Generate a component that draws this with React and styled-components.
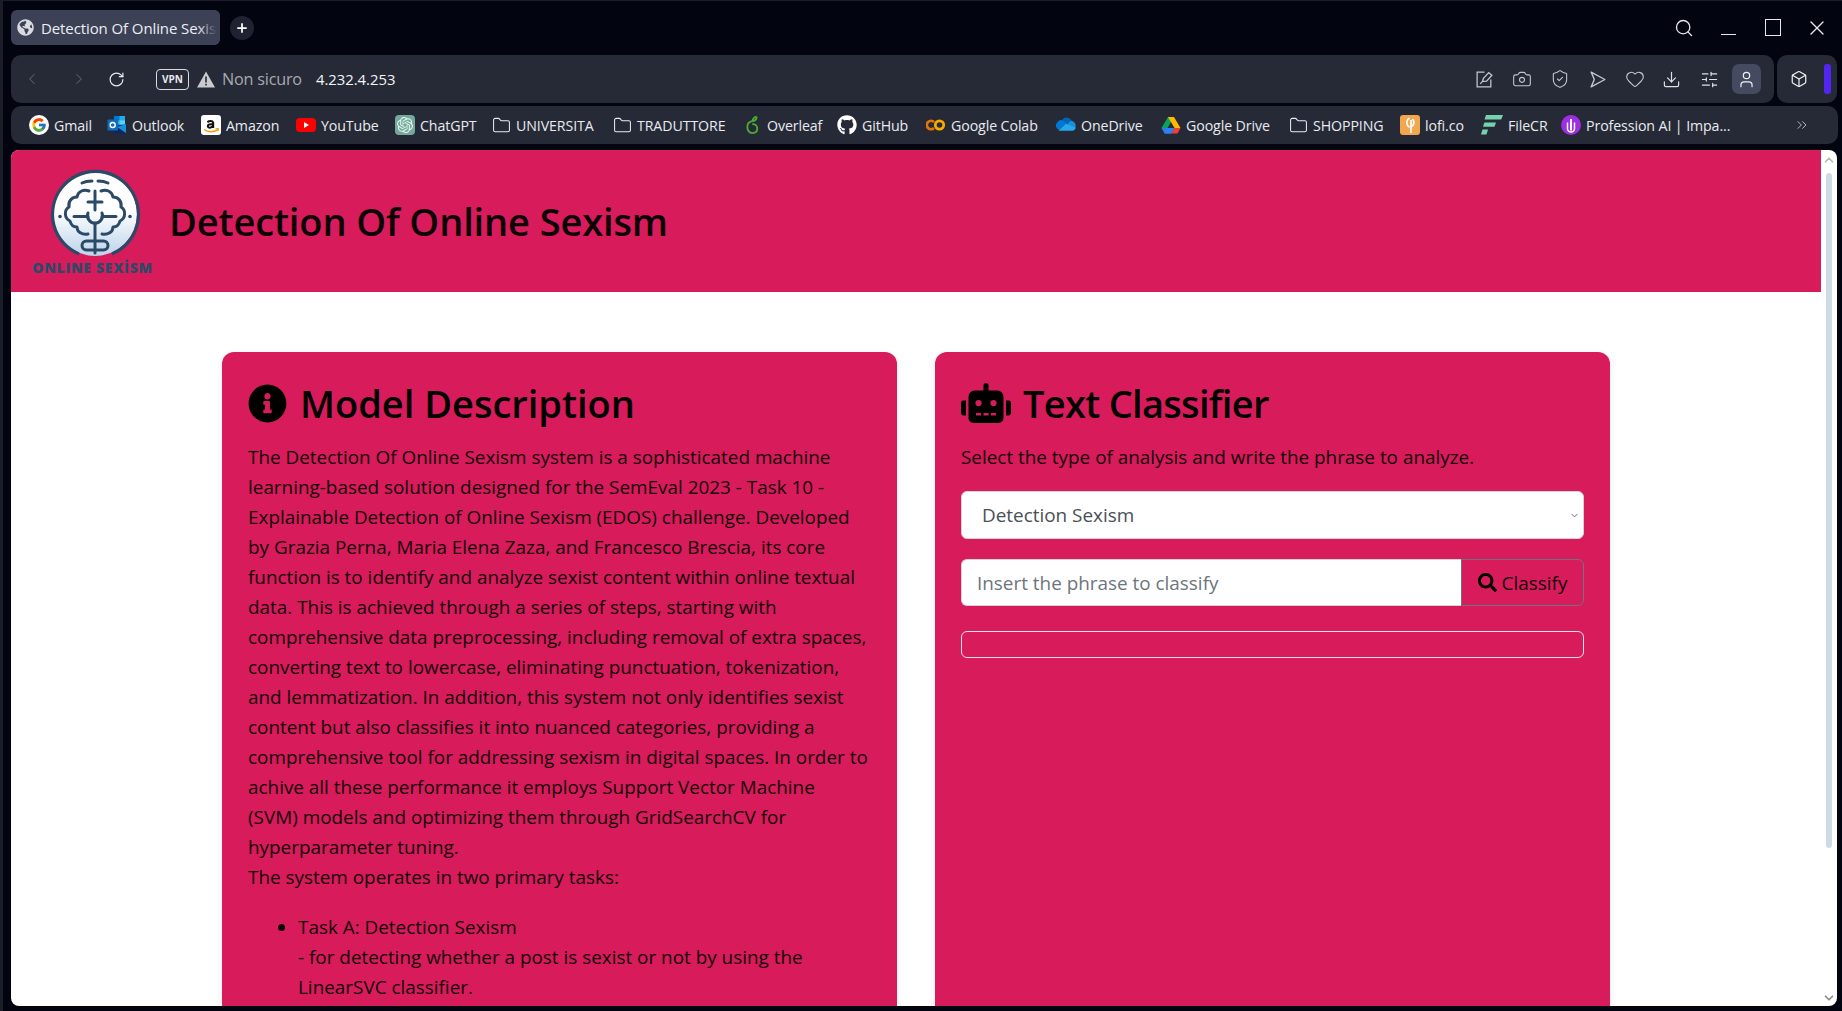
import React from "react";
import styled, { createGlobalStyle } from "styled-components";
import {
  ChevronLeft, ChevronRight, RotateCw, Camera, ShieldCheck, Heart, Download,
  SlidersHorizontal, User, Box, Search, X, Folder, ChevronsRight, ChevronUp, ChevronDown, Plus,
} from "lucide-react";
import { FaInfoCircle, FaRobot, FaSearch, FaGithub, FaGlobeAmericas } from "react-icons/fa";
import { FcGoogle } from "react-icons/fc";
import { SiOpenai } from "react-icons/si";

const PINK = "#d81b5b";
const BAR = "#262a36";
const FONT = `"Open Sans", "Noto Sans", "Liberation Sans", sans-serif`;

const GlobalStyle = createGlobalStyle`
  html, body { margin: 0; padding: 0; background: #02040f; overflow: hidden; }
  * { box-sizing: border-box; }
  body { font-family: ${FONT}; }
`;

const Win = styled.div`
  width: 1842px;
  height: 1011px;
  background: #02040f;
  box-shadow: inset 3px 1px 0 #1b1e29;
  overflow: hidden;
  display: flex;
  flex-direction: column;
`;

const TabStrip = styled.div`
  height: 55px;
  padding: 10px 5px 10px 11px;
  display: flex;
  align-items: center;
  color: #fff;
`;

const Tab = styled.div`
  position: relative;
  width: 209px;
  height: 35px;
  background: #3d4156;
  border-radius: 6px;
  display: flex;
  align-items: center;
  gap: 7px;
  padding: 0 6px;
  overflow: hidden;
  font-size: 15px;
  letter-spacing: -0.1px;
  white-space: nowrap;
  color: #eceef4;
  svg { flex: none; color: #d9dbe3; }
  &::after {
    content: "";
    position: absolute;
    top: 0;
    right: 0;
    bottom: 0;
    width: 22px;
    background: linear-gradient(to right, rgba(61, 65, 86, 0), #3d4156 85%);
  }
`;

const NewTab = styled.div`
  width: 24px;
  height: 24px;
  margin-left: 10px;
  border-radius: 50%;
  background: #1f2230;
  display: flex;
  align-items: center;
  justify-content: center;
`;

const WinControls = styled.div`
  margin-left: auto;
  display: flex;
  align-items: center;
  gap: 20.5px;
  padding-right: 8px;
  color: #e6e7ea;
`;

const WinSlot = styled.div`
  width: 24px;
  height: 24px;
  display: flex;
  align-items: center;
  justify-content: center;
`;

const Minimize = styled.div`
  width: 15px;
  height: 1.5px;
  margin-top: 14px;
  background: #e6e7ea;
`;

const Maximize = styled.div`
  width: 16px;
  height: 17px;
  border: 1.5px solid #e6e7ea;
`;

const AddressRow = styled.div`
  height: 48px;
  padding: 0 5px 0 11px;
  display: flex;
  gap: 3px;
`;

const AddressBar = styled.div`
  flex: 1;
  background: ${BAR};
  border-radius: 10px;
  display: flex;
  align-items: center;
  padding: 0 13px 0 12px;
  color: #d6d8de;
`;

const NavSlot = styled.div`
  width: ${(p) => p.$w}px;
  display: flex;
  align-items: center;
  color: ${(p) => p.$color || "#e8e9ee"};
`;

const Vpn = styled.div`
  width: 33px;
  height: 21px;
  border: 1px solid #d9dae0;
  border-radius: 4px;
  font-size: 10px;
  font-weight: 700;
  color: #e8e9ee;
  display: flex;
  align-items: center;
  justify-content: center;
  margin-right: 8px;
`;

const NotSecure = styled.span`
  font-size: 16.2px;
  letter-spacing: -0.2px;
  color: #a7a9b0;
  margin-left: 7px;
  width: 94px;
  white-space: nowrap;
`;

const Ip = styled.span`
  font-size: 14.8px;
  color: #f4f5f8;
`;

const ToolIcons = styled.div`
  margin-left: auto;
  display: flex;
  align-items: center;
  svg { display: block; }
`;

const ToolIcon = styled.div`
  width: 37.4px;
  display: flex;
  justify-content: center;
  color: #c4c6ce;
`;

const ProfileBtn = styled.div`
  width: 29px;
  height: 30px;
  border-radius: 7px;
  background: #464a60;
  color: #f0f1f5;
  display: flex;
  align-items: center;
  justify-content: center;
  margin-left: 4px;
`;

const ExtBox = styled.div`
  width: 60px;
  background: ${BAR};
  border-radius: 10px;
  display: flex;
  align-items: center;
  padding-left: 13px;
  color: #f0f1f5;
`;

const ExtBar = styled.div`
  width: 7px;
  height: 30px;
  margin-left: 16px;
  border-radius: 3px;
  background: #5225f0;
`;

const Bookmarks = styled.div`
  height: 38px;
  margin: 3px 4px 6px 11px;
  background: ${BAR};
  border-radius: 10px;
  display: flex;
  align-items: center;
  padding-left: 18px;
`;

const Bookmark = styled.div`
  width: ${(p) => p.$w}px;
  flex: none;
  display: flex;
  align-items: center;
  gap: 5px;
  font-size: 14.2px;
  letter-spacing: -0.1px;
  color: #e9ebf0;
  white-space: nowrap;
  svg { flex: none; display: block; }
`;

const MoreBookmarks = styled.div`
  margin-left: auto;
  margin-right: 28px;
  display: flex;
  color: #c9cbd2;
`;

const Page = styled.div`
  height: 856px;
  margin: 0 5px 0 11px;
  background: #fff;
  border-radius: 8px;
  overflow: hidden;
  display: flex;
`;

const Content = styled.div`
  flex: 1;
  min-width: 0;
  overflow: hidden;
`;

const Scrollbar = styled.div`
  width: 16px;
  flex: none;
  display: flex;
  flex-direction: column;
  align-items: center;
  justify-content: space-between;
  color: #8b8d92;
  padding: 3px 0 0;
`;

const Thumb = styled.div`
  width: 6px;
  height: 675px;
  margin-top: 6px;
  margin-bottom: auto;
  border-radius: 3px;
  background: #cfdae4;
`;

const Header = styled.header`
  height: 142px;
  background: ${PINK};
  display: flex;
  align-items: center;
  padding-left: 19px;
  gap: 14px;
`;

const Title = styled.h1`
  margin: 0;
  font-size: 38px;
  font-weight: 600;
  letter-spacing: -0.12px;
  color: #0a0005;
`;

const LogoText = styled.text`
  font-family: ${FONT};
  font-weight: 800;
  font-size: 14px;
  letter-spacing: 0.7px;
  fill: #2a4a68;
`;

const Cards = styled.main`
  display: flex;
  justify-content: center;
  gap: 38px;
  padding-top: 60px;
`;

const Card = styled.section`
  width: 675px;
  padding: 26px;
  background: ${PINK};
  border-radius: 12px;
  box-shadow: 0 2px 8px rgba(0, 0, 0, 0.08);
  min-height: 760px;
`;

const CardTitle = styled.h2`
  margin: 0 0 14px;
  height: 50px;
  display: flex;
  align-items: center;
  gap: 13px;
  font-size: 38px;
  font-weight: 600;
  letter-spacing: ${(p) => p.$spacing}px;
  color: #000;
  white-space: nowrap;
  svg { flex: none; }
`;

const TextLine = styled.span`
  display: block;
  height: 30px;
  line-height: 30px;
  font-size: 18.9px;
  color: #14020a;
  white-space: nowrap;
`;

const TaskList = styled.ul`
  margin: 20px 0 0;
  padding: 0 0 0 50px;
`;

const TaskItem = styled.li`
  font-size: 18.9px;
  line-height: 30px;
  color: #14020a;
`;

const Hint = styled(TextLine)`
  margin-bottom: 19px;
`;

const SelectWrap = styled.div`
  position: relative;
  color: #5f6670;
  svg { position: absolute; right: 4px; top: 19px; }
`;

const Select = styled.select`
  display: block;
  width: 100%;
  height: 48px;
  padding: 0 20px;
  appearance: none;
  background: #fff;
  border: 1px solid #ced4da;
  border-radius: 6px;
  font-family: ${FONT};
  font-size: 18.9px;
  color: #495057;
`;

const SearchGroup = styled.form`
  display: flex;
  height: 47px;
  margin: 20px 0 25px;
`;

const PhraseInput = styled.input`
  flex: 1;
  min-width: 0;
  padding: 0 15px;
  background: #fff;
  border: 1px solid #ced4da;
  border-right: 0;
  border-radius: 6px 0 0 6px;
  font-family: ${FONT};
  font-size: 18.9px;
  &::placeholder { color: #6c757d; opacity: 1; }
`;

const ClassifyBtn = styled.button`
  width: 123px;
  display: flex;
  align-items: center;
  justify-content: center;
  gap: 5px;
  background: ${PINK};
  border: 1px solid #6c757d;
  border-radius: 0 6px 6px 0;
  font-family: ${FONT};
  font-size: 18.9px;
  color: #14020a;
`;

const ResultBox = styled.div`
  height: 27px;
  border: 1px solid #f3e3e9;
  border-radius: 6px;
`;

const Tile = styled.span`
  width: 20px;
  height: 20px;
  flex: none;
  border-radius: 4px;
  background: #74aa9c;
  display: flex;
  align-items: center;
  justify-content: center;
`;

const GoogleTile = styled.span`
  width: 20px;
  height: 20px;
  flex: none;
  border-radius: 50%;
  background: #fff;
  display: flex;
  align-items: center;
  justify-content: center;
`;

const OutlookIcon = () => (
  <svg width="20" height="20" viewBox="0 0 20 20">
    <path d="M7 1h11v9H7z" fill="#28a8ea" />
    <path d="M7 1h5.500v4.500H7z" fill="#0078d4" />
    <path d="M12.500 5.500H18V10h-5.500z" fill="#50d9ff" />
    <path d="M7 10l11-0.500V18a1 1 0 0 1-1 1H8a1 1 0 0 1-1-1z" fill="#0a2767" opacity="0.85" />
    <path d="M10 12l9-3v9z" fill="#1490df" />
    <rect x="0.500" y="4.500" width="10.500" height="11" rx="1" fill="#0f6cbd" />
    <circle cx="5.700" cy="10" r="2.500" fill="none" stroke="#fff" strokeWidth="1.400" />
  </svg>
);

const AmazonIcon = () => (
  <svg width="20" height="20" viewBox="0 0 20 20">
    <rect width="20" height="20" rx="3" fill="#fff" />
    <path d="M6.800 7.500c.3-1.700 4.800-2.200 5.400.2v5.200M12 9.300c-3-.2-5.400.2-5.200 2.100.2 1.800 3.600 1.700 5.200-.5" fill="none" stroke="#111" strokeWidth="2" />
    <path d="M3 14.500c4 3 10 3 14-.2" fill="none" stroke="#f90" strokeWidth="1.500" />
    <path d="M14.500 13.800l3-.3-.6 2.700" fill="none" stroke="#f90" strokeWidth="1" />
  </svg>
);

const YoutubeIcon = () => (
  <svg width="20" height="20" viewBox="0 0 20 20">
    <rect y="3" width="20" height="14" rx="4" fill="#f00" />
    <path d="M8 7l5 3-5 3z" fill="#fff" />
  </svg>
);

const ChatGptIcon = () => (
  <Tile>
    <SiOpenai size={16} color="#e9f4ef" />
  </Tile>
);

const OverleafIcon = () => (
  <svg width="20" height="20" viewBox="0 0 20 20" fill="none" stroke="#4cae33" strokeWidth="1.800">
    <path d="M14.500 1.500c.3 3-1.700 4.300-4 4.600-3 .4-5.200 2.800-5.200 6 0 3.400 2.200 6 5 6 3 0 5-2 5-4.800 0-2.600-2.200-4.500-5-4.200" />
    <path d="M10.500 6.100c.2-2.200 1.800-4 4-4.600" />
  </svg>
);

const ColabIcon = () => (
  <svg width="20" height="20" viewBox="0 0 20 20" fill="none" stroke="#f9ab00" strokeWidth="2.800">
    <path d="M8 7a4.200 4.200 0 1 0 0 6" stroke="#e8710a" />
    <circle cx="13.500" cy="10" r="4.200" />
  </svg>
);

const OneDriveIcon = () => (
  <svg width="20" height="20" viewBox="3 3 16 16">
    <path d="M8 6.500a5 5 0 0 1 8 1.500l-6 4.500z" fill="#0364b8" />
    <path d="M4 9a4 4 0 0 1 5 -1.500l4 3.500-7 4a3.500 3.500 0 0 1-2-6z" fill="#0078d4" />
    <path d="M14 8a3.700 3.700 0 0 1 4.500 4.800L12 11z" fill="#1490df" />
    <path d="M5 15.500h11a3 3 0 0 0 2.700-2.800L11 10z" fill="#28a8ea" />
  </svg>
);

const DriveIcon = () => (
  <svg width="20" height="20" viewBox="0 0 20 20">
    <path d="M7 2h6l-6.500 11H0.500z" fill="#0ba25e" />
    <path d="M13 2l6.500 11h-6L7 2z" fill="#ffba00" />
    <path d="M0.500 13h6.200L13 13l-3 5.500H3.500z" fill="#3777e3" />
    <path d="M13 13h6.500l-3 5.500H10z" fill="#e94235" />
    <path d="M6.500 13H13l-3 5.500H3.500z" fill="#2684fc" />
  </svg>
);

const LofiIcon = () => (
  <svg width="20" height="20" viewBox="0 0 20 20">
    <rect width="20" height="20" rx="3" fill="#f2a64e" />
    <path d="M9.500 3C6.500 5 6 8.500 8 11c.6.8 1.200 1 1.500.3M12.500 4c1.600 2 1.700 5-.2 7.500M11 5v13" fill="none" stroke="#fff" strokeWidth="1.700" />
  </svg>
);

const FileCrIcon = () => (
  <svg width="22" height="22" viewBox="0 0 22 22" fill="#74d3ae">
    <path d="M5 1h17l-1.800 4.500H3.500z" />
    <path d="M3.400 8.500H15l-1.500 4.300H2z" />
    <path d="M1.500 15.500H7l-1.500 5H0z" />
  </svg>
);

const ProfessionIcon = () => (
  <svg width="20" height="20" viewBox="0 0 20 20">
    <circle cx="10" cy="10" r="10" fill="#9d2fe0" />
    <path d="M6.500 7.500v6a3.500 3.500 0 0 0 7 0v-6" fill="none" stroke="#fff" strokeWidth="1.500" />
    <path d="M10 4v11.500" stroke="#fff" strokeWidth="2" />
  </svg>
);

const FolderIcon = () => <Folder size={19} strokeWidth={1.3} color="#e9ebf0" />;

const bookmarks = [
  { name: "Gmail", w: 78, icon: <GoogleTile><FcGoogle size={16} /></GoogleTile> },
  { name: "Outlook", w: 94, icon: <OutlookIcon /> },
  { name: "Amazon", w: 95, icon: <AmazonIcon /> },
  { name: "YouTube", w: 99, icon: <YoutubeIcon /> },
  { name: "ChatGPT", w: 97, icon: <ChatGptIcon /> },
  { name: "UNIVERSITA", w: 121, icon: <FolderIcon /> },
  { name: "TRADUTTORE", w: 129, icon: <FolderIcon /> },
  { name: "Overleaf", w: 95, icon: <OverleafIcon /> },
  { name: "GitHub", w: 89, icon: <FaGithub size={20} color="#fff" /> },
  { name: "Google Colab", w: 130, icon: <ColabIcon /> },
  { name: "OneDrive", w: 105, icon: <OneDriveIcon /> },
  { name: "Google Drive", w: 128, icon: <DriveIcon /> },
  { name: "SHOPPING", w: 111, icon: <FolderIcon /> },
  { name: "lofi.co", w: 81, icon: <LofiIcon /> },
  { name: "FileCR", w: 80, icon: <FileCrIcon /> },
  { name: "Profession AI | Impa...", w: 190, icon: <ProfessionIcon /> },
];

const descriptionLines = [
  "The Detection Of Online Sexism system is a sophisticated machine",
  "learning-based solution designed for the SemEval 2023 - Task 10 -",
  "Explainable Detection of Online Sexism (EDOS) challenge. Developed",
  "by Grazia Perna, Maria Elena Zaza, and Francesco Brescia, its core",
  "function is to identify and analyze sexist content within online textual",
  "data. This is achieved through a series of steps, starting with",
  "comprehensive data preprocessing, including removal of extra spaces,",
  "converting text to lowercase, eliminating punctuation, tokenization,",
  "and lemmatization. In addition, this system not only identifies sexist",
  "content but also classifies it into nuanced categories, providing a",
  "comprehensive tool for addressing sexism in digital spaces. In order to",
  "achive all these performance it employs Support Vector Machine",
  "(SVM) models and optimizing them through GridSearchCV for",
  "hyperparameter tuning.",
  "The system operates in two primary tasks:",
];

const Logo = () => (
  <svg width="125" height="115" viewBox="0 0 125 115">
    <defs>
      <linearGradient id="disc" x1="0" y1="0" x2="0" y2="1">
        <stop offset="0.45" stopColor="#ffffff" />
        <stop offset="1" stopColor="#bcd4ea" />
      </linearGradient>
    </defs>
    <circle cx="65" cy="50" r="42" fill="url(#disc)" />
    <path d="M49 90A43 43 0 1 1 82 90" fill="none" stroke="#2a4a68" strokeWidth="3.200" />
    <g fill="none" stroke="#2a4a68" strokeWidth="3" strokeLinecap="round" strokeLinejoin="round">
      <path d="M52 19q4-2 10-2M68 17q6 0 10 2" />
      <path d="M65 27v19M58 38h14" />
      <path d="M59 27c-5-2-11 0-12 6-5 0-9 4-8 10-5 3-5 11 1 14 1 4 4 6 7 6 0 5 5 8 11 7" />
      <path d="M71 27c5-2 11 0 12 6 5 0 9 4 8 10 5 3 5 11-1 14-1 4-4 6-7 6 0 5-5 8-11 7" />
      <path d="M44 52.500h14M72 52.500h14" />
      <path d="M58 49a7.500 7.500 0 1 0 14 0" />
      <path d="M65 59v30" />
      <rect x="52" y="77" width="26" height="9" rx="4.500" />
    </g>
    <circle cx="30" cy="52.500" r="1.800" fill="#2a4a68" />
    <circle cx="100" cy="52.500" r="1.800" fill="#2a4a68" />
    <LogoText x="62.500" y="109" textAnchor="middle">ONLINE SEXİSM</LogoText>
  </svg>
);

const WarningIcon = () => (
  <svg width="18" height="17" viewBox="0 0 18 17">
    <path d="M9 0.500L18 16.500H0z" fill="#c9cace" />
    <path d="M8.200 5.500h1.600v6H8.200zM8.200 12.800h1.600v1.700H8.200z" fill={BAR} />
  </svg>
);

const EditIcon = () => (
  <svg width="19" height="19" viewBox="0 0 18 18" fill="none" stroke="currentColor" strokeWidth="1.200">
    <path d="M9 2H2v14h13V9" />
    <path d="M7 11l1-3 5-5.500 3 2.500-5 5.500zM5 13l2-2" />
  </svg>
);

const FlowIcon = () => (
  <svg width="19" height="19" viewBox="0 0 18 18" fill="none" stroke="currentColor" strokeWidth="1.300" strokeLinejoin="round">
    <path d="M3 2l13 7-13 7 3-7z" />
  </svg>
);

const ResultArea = () => (
  <>
    <SearchGroup onSubmit={(e) => e.preventDefault()}>
      <PhraseInput placeholder="Insert the phrase to classify" />
      <ClassifyBtn type="submit">
        <FaSearch size={19} color="#000" />
        Classify
      </ClassifyBtn>
    </SearchGroup>
    <ResultBox />
  </>
);

export default function App() {
  return (
    <Win>
      <GlobalStyle />
      <TabStrip>
        <Tab>
          <FaGlobeAmericas size={17} />
          Detection Of Online Sexism
        </Tab>
        <NewTab><Plus size={14} strokeWidth={3} /></NewTab>
        <WinControls>
          <WinSlot><Search size={20} strokeWidth={1.6} /></WinSlot>
          <WinSlot><Minimize /></WinSlot>
          <WinSlot><Maximize /></WinSlot>
          <WinSlot><X size={24} strokeWidth={1.4} /></WinSlot>
        </WinControls>
      </TabStrip>

      <AddressRow>
        <AddressBar>
          <NavSlot $w={47} $color="#5d606b"><ChevronLeft size={18} strokeWidth={1.4} /></NavSlot>
          <NavSlot $w={38} $color="#5d606b"><ChevronRight size={18} strokeWidth={1.4} /></NavSlot>
          <NavSlot $w={48}><RotateCw size={17} strokeWidth={1.7} /></NavSlot>
          <Vpn>VPN</Vpn>
          <WarningIcon />
          <NotSecure>Non sicuro</NotSecure>
          <Ip>4.232.4.253</Ip>
          <ToolIcons>
            <ToolIcon><EditIcon /></ToolIcon>
            <ToolIcon><Camera size={20} strokeWidth={1.3} /></ToolIcon>
            <ToolIcon><ShieldCheck size={20} strokeWidth={1.3} /></ToolIcon>
            <ToolIcon><FlowIcon /></ToolIcon>
            <ToolIcon><Heart size={20} strokeWidth={1.3} /></ToolIcon>
            <ToolIcon><Download size={19} strokeWidth={1.5} color="#e0e1e6" /></ToolIcon>
            <ToolIcon><SlidersHorizontal size={19} strokeWidth={1.5} color="#e0e1e6" /></ToolIcon>
            <ProfileBtn><User size={19} strokeWidth={1.5} /></ProfileBtn>
          </ToolIcons>
        </AddressBar>
        <ExtBox>
          <Box size={18} strokeWidth={1.6} />
          <ExtBar />
        </ExtBox>
      </AddressRow>

      <Bookmarks>
        {bookmarks.map((b) => (
          <Bookmark key={b.name} $w={b.w}>
            {b.icon}
            {b.name}
          </Bookmark>
        ))}
        <MoreBookmarks><ChevronsRight size={16} strokeWidth={1.3} /></MoreBookmarks>
      </Bookmarks>

      <Page>
        <Content>
          <Header>
            <Logo />
            <Title>Detection Of Online Sexism</Title>
          </Header>
          <Cards>
            <Card>
              <CardTitle $spacing={0}><FaInfoCircle size={39} />Model Description</CardTitle>
              {descriptionLines.map((line) => (
                <TextLine key={line}>{line}</TextLine>
              ))}
              <TaskList>
                <TaskItem>
                  Task A: Detection Sexism
                  <br />
                  - for detecting whether a post is sexist or not by using the LinearSVC classifier.
                </TaskItem>
              </TaskList>
            </Card>
            <Card>
              <CardTitle $spacing={-0.7}><FaRobot size={50} style={{ marginRight: -1 }} />Text Classifier</CardTitle>
              <Hint>Select the type of analysis and write the phrase to analyze.</Hint>
              <SelectWrap>
                <Select defaultValue="a">
                  <option value="a">Detection Sexism</option>
                </Select>
                <ChevronDown size={11} strokeWidth={2} />
              </SelectWrap>
              <ResultArea />
            </Card>
          </Cards>
        </Content>
        <Scrollbar>
          <ChevronUp size={14} strokeWidth={3} color="#b5b7ba" />
          <Thumb />
          <ChevronDown size={14} strokeWidth={3} style={{ marginBottom: 1 }} />
        </Scrollbar>
      </Page>
    </Win>
  );
}
